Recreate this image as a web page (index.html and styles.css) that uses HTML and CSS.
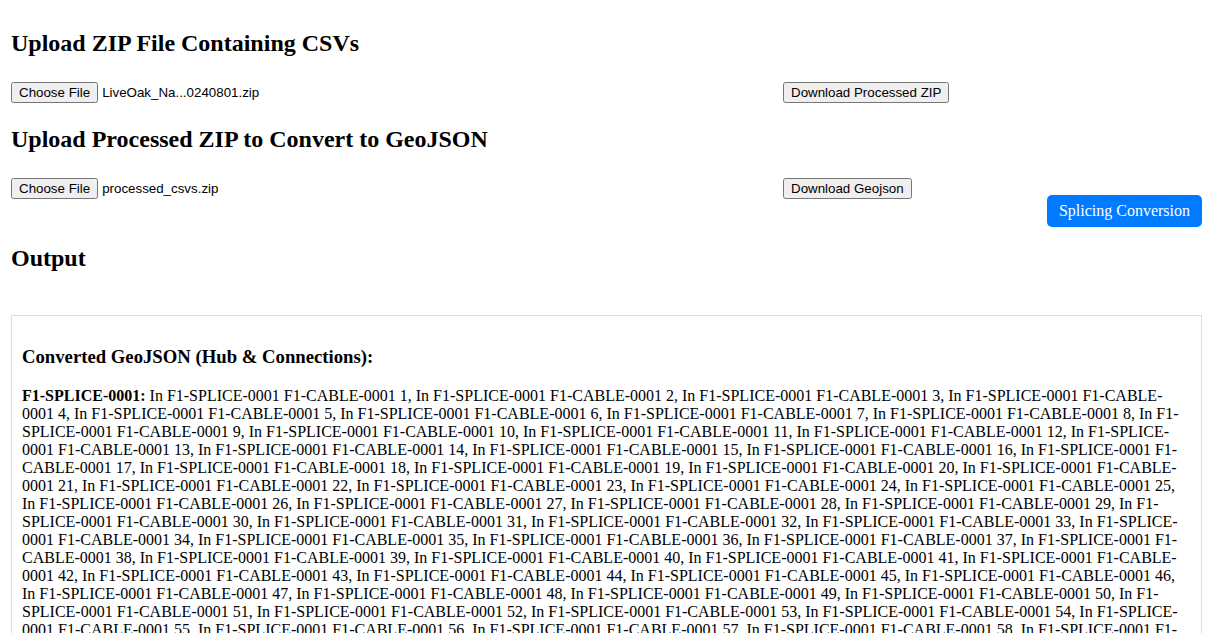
FILE: index.html
```html
<!DOCTYPE html>
<html lang="en">
<head>
<meta charset="utf-8">
<title>Splicing Conversion</title>
<link rel="stylesheet" href="styles.css">
</head>
<body>
<h2 class="title">Upload ZIP File Containing CSVs</h2>
<div class="row">
  <div class="file-field"><button class="native-btn" type="button">Choose File</button><span class="file-name">LiveOak_Na...0240801.zip</span></div>
  <div><button class="native-btn" type="button">Download Processed ZIP</button></div>
</div>
<h2 class="title">Upload Processed ZIP to Convert to GeoJSON</h2>
<div class="row row-wide">
  <div class="file-field"><button class="native-btn" type="button">Choose File</button><span class="file-name">processed_csvs.zip</span></div>
  <div><button class="native-btn" type="button">Download Geojson</button></div>
  <button class="primary-btn" type="button">Splicing Conversion</button>
</div>
<h2 class="title output-title">Output</h2>
<div class="output-box">
  <h3 class="box-title">Converted GeoJSON (Hub &amp; Connections):</h3>
  <p class="hub"><strong>F1-SPLICE-0001:</strong> In F1-SPLICE-0001 F1-CABLE-0001 1, In F1-SPLICE-0001 F1-CABLE-0001 2, In F1-SPLICE-0001 F1-CABLE-0001 3, In F1-SPLICE-0001 F1-CABLE-0001 4, In F1-SPLICE-0001 F1-CABLE-0001 5, In F1-SPLICE-0001 F1-CABLE-0001 6, In F1-SPLICE-0001 F1-CABLE-0001 7, In F1-SPLICE-0001 F1-CABLE-0001 8, In F1-SPLICE-0001 F1-CABLE-0001 9, In F1-SPLICE-0001 F1-CABLE-0001 10, In F1-SPLICE-0001 F1-CABLE-0001 11, In F1-SPLICE-0001 F1-CABLE-0001 12, In F1-SPLICE-0001 F1-CABLE-0001 13, In F1-SPLICE-0001 F1-CABLE-0001 14, In F1-SPLICE-0001 F1-CABLE-0001 15, In F1-SPLICE-0001 F1-CABLE-0001 16, In F1-SPLICE-0001 F1-CABLE-0001 17, In F1-SPLICE-0001 F1-CABLE-0001 18, In F1-SPLICE-0001 F1-CABLE-0001 19, In F1-SPLICE-0001 F1-CABLE-0001 20, In F1-SPLICE-0001 F1-CABLE-0001 21, In F1-SPLICE-0001 F1-CABLE-0001 22, In F1-SPLICE-0001 F1-CABLE-0001 23, In F1-SPLICE-0001 F1-CABLE-0001 24, In F1-SPLICE-0001 F1-CABLE-0001 25, In F1-SPLICE-0001 F1-CABLE-0001 26, In F1-SPLICE-0001 F1-CABLE-0001 27, In F1-SPLICE-0001 F1-CABLE-0001 28, In F1-SPLICE-0001 F1-CABLE-0001 29, In F1-SPLICE-0001 F1-CABLE-0001 30, In F1-SPLICE-0001 F1-CABLE-0001 31, In F1-SPLICE-0001 F1-CABLE-0001 32, In F1-SPLICE-0001 F1-CABLE-0001 33, In F1-SPLICE-0001 F1-CABLE-0001 34, In F1-SPLICE-0001 F1-CABLE-0001 35, In F1-SPLICE-0001 F1-CABLE-0001 36, In F1-SPLICE-0001 F1-CABLE-0001 37, In F1-SPLICE-0001 F1-CABLE-0001 38, In F1-SPLICE-0001 F1-CABLE-0001 39, In F1-SPLICE-0001 F1-CABLE-0001 40, In F1-SPLICE-0001 F1-CABLE-0001 41, In F1-SPLICE-0001 F1-CABLE-0001 42, In F1-SPLICE-0001 F1-CABLE-0001 43, In F1-SPLICE-0001 F1-CABLE-0001 44, In F1-SPLICE-0001 F1-CABLE-0001 45, In F1-SPLICE-0001 F1-CABLE-0001 46, In F1-SPLICE-0001 F1-CABLE-0001 47, In F1-SPLICE-0001 F1-CABLE-0001 48, In F1-SPLICE-0001 F1-CABLE-0001 49, In F1-SPLICE-0001 F1-CABLE-0001 50, In F1-SPLICE-0001 F1-CABLE-0001 51, In F1-SPLICE-0001 F1-CABLE-0001 52, In F1-SPLICE-0001 F1-CABLE-0001 53, In F1-SPLICE-0001 F1-CABLE-0001 54, In F1-SPLICE-0001 F1-CABLE-0001 55, In F1-SPLICE-0001 F1-CABLE-0001 56, In F1-SPLICE-0001 F1-CABLE-0001 57, In F1-SPLICE-0001 F1-CABLE-0001 58, In F1-SPLICE-0001 F1-CABLE-0001 59, In F1-SPLICE-0001 F1-CABLE-0001 60, In F1-SPLICE-0001 F1-CABLE-0001 61, In F1-SPLICE-0001 F1-CABLE-0001 62, In F1-SPLICE-0001 F1-CABLE-0001 63, In F1-SPLICE-0001 F1-CABLE-0001 64, In F1-SPLICE-0001 F1-CABLE-0001 65, In F1-SPLICE-0001 F1-CABLE-0001 66, In F1-SPLICE-0001 F1-CABLE-0001 67, In F1-SPLICE-0001 F1-CABLE-0001 68, In F1-SPLICE-0001 F1-CABLE-0001 69, In F1-SPLICE-0001 F1-CABLE-0001 70, In F1-SPLICE-0001 F1-CABLE-0001 71, In F1-SPLICE-0001 F1-CABLE-0001 72</p>
</div>
</body>
</html>
```

FILE: styles.css
```css
html {
  scrollbar-width: none;
}

body {
  margin: 0;
  padding: 10px 9px 0 11px;
  font-family: "Liberation Serif", "Times New Roman", serif;
  font-size: 16px;
  color: #000;
  background: #fff;
}

.title {
  font-size: 24px;
  font-weight: bold;
  margin: 19.92px 0;
}

.row {
  display: grid;
  grid-template-columns: 772px 1fr;
  align-items: start;
  margin: 25.5px 0 23px;
}

.row-wide {
  grid-template-columns: 772px 1fr auto;
  margin-top: 24.5px;
  margin-bottom: 0;
}

.file-field {
  display: flex;
  align-items: center;
  gap: 4px;
  font-family: "Liberation Sans", Arial, sans-serif;
  font-size: 13.333px;
}

.native-btn {
  font-family: "Liberation Sans", Arial, sans-serif;
  font-size: 13.333px;
  margin: 0;
}

.primary-btn {
  margin-top: 17px;
  padding: 7px 12px;
  border: none;
  border-radius: 5px;
  background: #007bff;
  color: #fff;
  font-family: "Liberation Serif", "Times New Roman", serif;
  font-size: 16px;
  line-height: normal;
}

.output-title {
  margin-top: 17.6px;
}

.output-box {
  margin-top: 43px;
  border: 1px solid #ddd;
  padding: 12px 10px 10px;
}

.box-title {
  font-size: 18.72px;
  margin: 18.72px 0;
}

.hub {
  margin: 16px 0;
}
```
